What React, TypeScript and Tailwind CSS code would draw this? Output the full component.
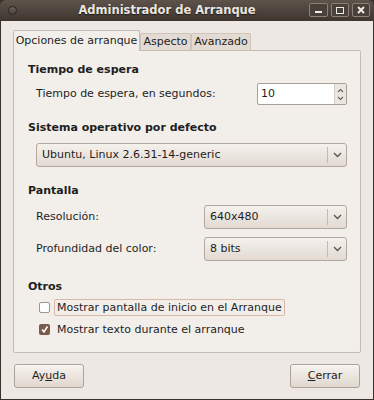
import React from "react";

const font = { fontFamily: '"DejaVu Sans", "Liberation Sans", sans-serif' };

function Combo({ value, className }: { value: string; className?: string }) {
  return (
    <div
      className={`flex h-[24px] items-stretch rounded-[3px] border border-[#b3a89d] bg-gradient-to-b from-[#f5f1ed] to-[#e2dad2] ${className ?? ""}`}
    >
      <div className="flex flex-1 items-center pl-[5px]">{value}</div>
      <div className="my-[3px] w-px bg-[#c4bab0]" />
      <div className="flex w-[18px] items-center justify-center">
        <svg width="9" height="6" viewBox="0 0 9 6">
          <path d="M1 1 L4.5 4.5 L8 1" stroke="#5a524b" strokeWidth="1.3" fill="none" />
        </svg>
      </div>
    </div>
  );
}

function PushButton({ children }: { children: React.ReactNode }) {
  return (
    <div className="flex h-[24px] w-[70px] items-center justify-center rounded-[3px] border border-[#aca298] bg-gradient-to-b from-[#f6f2ee] to-[#e0d8cf] shadow-[inset_0_1px_0_#fbf9f7]">
      {children}
    </div>
  );
}

export default function App() {
  return (
    <div className="h-[400px] w-[374px] overflow-hidden bg-[#3a312b] text-[11px] leading-[14px] text-[#1e1e1e]" style={font}>
      <div className="flex h-full flex-col overflow-hidden rounded-t-[6px] bg-[#3a312b]">
        {/* title bar */}
        <div className="relative flex h-[21px] shrink-0 items-center bg-gradient-to-b from-[#5e534b] to-[#3f3630]">
          <div className="ml-[8px] h-[9px] w-[9px] rounded-full border border-[#2a2420] bg-gradient-to-b from-[#6a625c] to-[#4a423c]" />
          <div className="absolute left-0 right-[40px] top-[3px] text-center text-[11.5px] font-bold text-[#ebe6e1] [text-shadow:0_1px_1px_#1f1a16]">
            Administrador de Arranque
          </div>
          <div className="absolute right-[4px] top-[3px] flex gap-[3px]">
            <div className="flex h-[14px] w-[19px] items-end justify-center rounded-[2px] border border-[#8c8179] bg-[#4a403a] pb-[3px]">
              <div className="h-[2px] w-[7px] bg-[#eeeae6]" />
            </div>
            <div className="flex h-[14px] w-[18px] items-center justify-center rounded-[2px] border border-[#8c8179] bg-[#4a403a]">
              <div className="h-[7px] w-[8px] border-[1.5px] border-[#eeeae6]" />
            </div>
            <div className="flex h-[14px] w-[18px] items-center justify-center rounded-[2px] border border-[#8c8179] bg-[#4a403a]">
              <svg width="8" height="8" viewBox="0 0 8 8">
                <path d="M1 1 L7 7 M7 1 L1 7" stroke="#eeeae6" strokeWidth="2" />
              </svg>
            </div>
          </div>
        </div>

        {/* body */}
        <div className="mx-[1px] mb-[1px] flex flex-1 flex-col bg-[#ede8e3] px-[12px] pt-[9px]">
          {/* tabs */}
          <div className="flex h-[20px] items-end">
            <div className="relative z-10 -mb-px flex h-[21px] w-[127px] items-center justify-center rounded-t-[2px] border border-b-0 border-[#c6bcb2] bg-[#f2eeea]">
              Opciones de arranque
            </div>
            <div className="flex h-[17px] w-[51px] items-center justify-center rounded-t-[2px] border border-b-0 border-[#cfc5bb] bg-[#e2dad3]">
              Aspecto
            </div>
            <div className="flex h-[17px] w-[60px] items-center justify-center rounded-t-[2px] border border-b-0 border-[#cfc5bb] bg-[#e2dad3]">
              Avanzado
            </div>
          </div>

          {/* notebook page */}
          <div className="flex h-[303px] flex-col rounded-b-[2px] rounded-tr-[2px] border border-[#c6bcb2] bg-[#f2eeea] pl-[14px] pr-[13px] pt-[12px]">
            <div className="font-bold">Tiempo de espera</div>
            <div className="mt-[6px] flex items-center pl-[8px]">
              <div className="flex-1">Tiempo de espera, en segundos:</div>
              <div className="flex h-[22px] w-[90px] rounded-[2px] border border-[#a99f95] bg-white">
                <div className="flex flex-1 items-center pl-[3px]">10</div>
                <div className="flex w-[12px] flex-col items-center justify-center gap-[3px] border-l border-[#d8d0c8] bg-[#ece6e0]">
                  <svg width="7" height="5" viewBox="0 0 7 5">
                    <path d="M1 4 L3.5 1.5 L6 4" stroke="#6a625a" strokeWidth="1.1" fill="none" />
                  </svg>
                  <svg width="7" height="5" viewBox="0 0 7 5">
                    <path d="M1 1 L3.5 3.5 L6 1" stroke="#6a625a" strokeWidth="1.1" fill="none" />
                  </svg>
                </div>
              </div>
            </div>

            <div className="mt-[16px] font-bold">Sistema operativo por defecto</div>
            <div className="mt-[8px] pl-[8px]">
              <Combo value="Ubuntu, Linux 2.6.31-14-generic" />
            </div>

            <div className="mt-[17px] font-bold">Pantalla</div>
            <div className="mt-[7px] flex items-center pl-[8px]">
              <div className="flex-1">Resolución:</div>
              <Combo value="640x480" className="w-[143px]" />
            </div>
            <div className="mt-[8px] flex items-center pl-[8px]">
              <div className="flex-1">Profundidad del color:</div>
              <Combo value="8 bits" className="w-[143px]" />
            </div>

            <div className="mt-[19px] font-bold">Otros</div>
            <div className="mt-[5px] flex h-[17px] items-center pl-[11px]">
              <div className="h-[11px] w-[11px] rounded-[2px] border border-[#9d9389] bg-white" />
              <div className="ml-[4px] flex h-[17px] items-center rounded-[2px] border border-[#d9b8a5] px-[2px]">
                Mostrar pantalla de inicio en el Arranque
              </div>
            </div>
            <div className="mt-[5px] flex h-[17px] items-center pl-[11px]">
              <div className="flex h-[11px] w-[11px] items-center justify-center rounded-[2px] bg-[#7a5a4a]">
                <svg width="9" height="9" viewBox="0 0 9 9">
                  <path d="M2 4.5 L4 7 L7.5 1.5" stroke="#ffffff" strokeWidth="1.6" fill="none" />
                </svg>
              </div>
              <div className="ml-[7px]">Mostrar texto durante el arranque</div>
            </div>
          </div>

          {/* buttons */}
          <div className="mt-[11px] flex justify-between px-[1px]">
            <PushButton>
              Ay<span className="underline">u</span>da
            </PushButton>
            <PushButton>
              <span className="underline">C</span>errar
            </PushButton>
          </div>
        </div>
      </div>
    </div>
  );
}
